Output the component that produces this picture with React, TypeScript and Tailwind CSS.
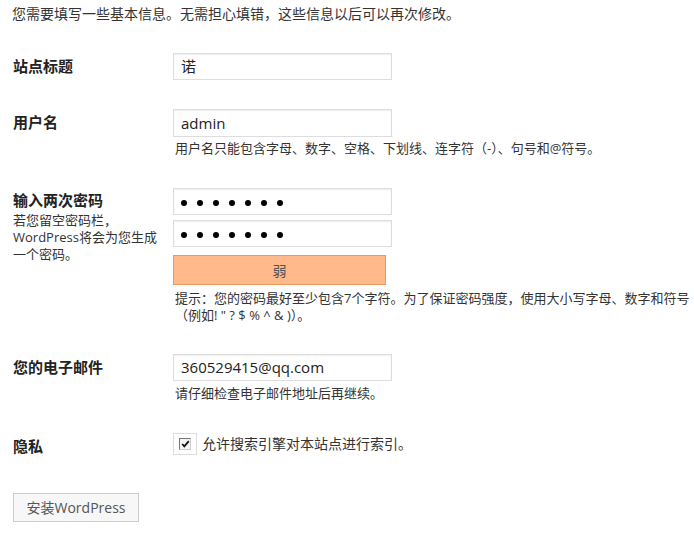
import React from "react";

const font = "font-['Open_Sans','Noto_Sans_CJK_SC',sans-serif]";

function Label({ children }: { children: React.ReactNode }) {
  return <div className="w-[160px] shrink-0 text-[15px] font-bold leading-[27px] text-[#222]">{children}</div>;
}

function Field({ children, h = "h-[27px]" }: { children: React.ReactNode; h?: string }) {
  return (
    <div
      className={`${h} w-[219px] border border-[#ddd] bg-white px-[7px] text-[15px] leading-[25px] text-[#222] shadow-[inset_0_1px_2px_rgba(0,0,0,0.07)] flex items-center`}
    >
      {children}
    </div>
  );
}

function Dots() {
  return (
    <div className="flex gap-[10px] items-center pt-[3px]">
      {Array.from({ length: 7 }).map((_, i) => (
        <div key={i} className="w-[6px] h-[6px] rounded-full bg-black" />
      ))}
    </div>
  );
}

export default function App() {
  return (
    <div className={`w-[694px] h-[535px] bg-white text-[#333] ${font} overflow-hidden`}>
      <div className="pl-[12px] pt-[4px] text-[14px] leading-[20px] text-[#333]">
        您需要填写一些基本信息。无需担心填错，这些信息以后可以再次修改。
      </div>

      <div className="pl-[13px]">
        {/* Site title */}
        <div className="flex mt-[29px]">
          <Label>站点标题</Label>
          <div>
            <Field>诺</Field>
          </div>
        </div>

        {/* Username */}
        <div className="flex mt-[29px]">
          <Label>用户名</Label>
          <div>
            <Field h="h-[28px]">admin</Field>
            <div className="mt-[3px] text-[13px] leading-[16px] text-[#333] pl-[2px]">
              用户名只能包含字母、数字、空格、下划线、连字符（-）、句号和@符号。
            </div>
          </div>
        </div>

        {/* Password */}
        <div className="flex mt-[32px]">
          <div className="w-[160px] shrink-0">
            <div className="text-[15px] font-bold leading-[24px] text-[#222]">输入两次密码</div>
            <div className="text-[13px] leading-[17px] text-[#333]">
              若您留空密码栏，
              <br />
              WordPress将会为您生成
              <br />
              一个密码。
            </div>
          </div>
          <div>
            <Field>
              <Dots />
            </Field>
            <div className="mt-[5px]">
              <Field>
                <Dots />
              </Field>
            </div>
            <div className="mt-[8px] w-[213px] h-[30px] bg-[#ffb98b] border border-[#e99b5e] flex items-center justify-center text-[14px] text-[#555]">
              弱
            </div>
            <div className="mt-[5px] text-[13px] leading-[17px] text-[#333] pl-[2px] whitespace-nowrap">
              <div>提示：您的密码最好至少包含7个字符。为了保证密码强度，使用大小写字母、数字和符号</div>
              <div>（例如! " ? $ % ^ &amp; )）。</div>
            </div>
          </div>
        </div>

        {/* Email */}
        <div className="flex mt-[30px]">
          <Label>您的电子邮件</Label>
          <div>
            <Field>360529415@qq.com</Field>
            <div className="mt-[4px] text-[13px] leading-[16px] text-[#333] pl-[2px]">
              请仔细检查电子邮件地址后再继续。
            </div>
          </div>
        </div>

        {/* Privacy */}
        <div className="flex mt-[32px] items-start">
          <Label>隐私</Label>
          <div className="flex items-center gap-[5px]">
            <div className="w-[24px] h-[22px] border border-[#ddd] bg-white flex items-center justify-center">
              <div className="w-[12px] h-[12px] border border-t-[#777] border-l-[#777] border-r-[#ccc] border-b-[#ccc] bg-[#f4f4f4] flex items-center justify-center">
                <svg width="9" height="8" viewBox="0 0 9 8">
                  <path d="M1.2 4 L3.3 6.3 L7.8 1.2" fill="none" stroke="#111" strokeWidth="1.8" />
                </svg>
              </div>
            </div>
            <span className="text-[14px] leading-[22px] text-[#333]">允许搜索引擎对本站点进行索引。</span>
          </div>
        </div>

        {/* Button */}
        <div className="mt-[33px]">
          <div className="w-[126px] h-[29px] border border-[#ccc] bg-[#f7f7f7] flex items-center justify-center text-[14px] text-[#555]">
            安装WordPress
          </div>
        </div>
      </div>
    </div>
  );
}
